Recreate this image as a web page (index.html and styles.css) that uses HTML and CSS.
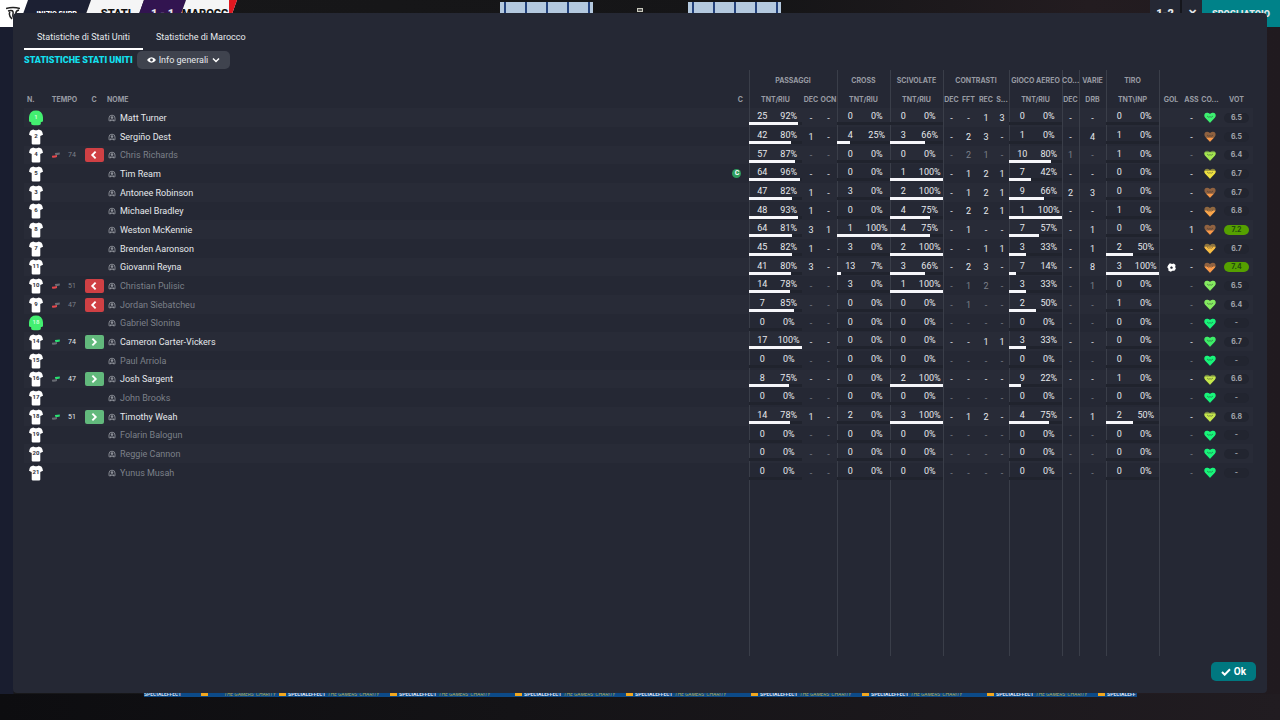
FILE: index.html
```html
<!DOCTYPE html>
<html lang="it">
<head>
<meta charset="utf-8">
<title>Statistiche Stati Uniti</title>
<link rel="stylesheet" href="styles.css">
</head>
<body>
<svg class="defs" aria-hidden="true">
  <symbol id="shirt" viewBox="0 0 14 16"><path d="M4.3.6C5 1.5 9 1.5 9.700.6L12.300 1.600Q13.400 2.300 14 5.800L11.300 7V14.600Q11.300 15.600 10 15.600H4Q2.700 15.600 2.700 14.600V7L0 5.800Q.6 2.300 1.700 1.600Z"/></symbol>
  <symbol id="keeper" viewBox="0 0 14 16"><path d="M4.300.8Q7 .2 9.700.8Q12.400 1.700 13.400 4.500Q14.400 7.500 13.900 11.400L11.800 12.200V14Q11.600 15.300 7 15.300Q2.400 15.300 2.200 14V12.200L.1 11.400Q-.4 7.500.6 4.500Q1.600 1.700 4.300.8Z"/></symbol>
  <symbol id="person" viewBox="0 0 8 8"><path d="M1 6.800V4Q1 1.200 4 1.200Q7 1.200 7 4V6.800" fill="none" stroke="currentColor" stroke-width=".9"/><circle cx="4" cy="3.600" r="1.300" fill="currentColor"/><path d="M1 7.200Q1.600 5.400 3.200 5.200L4 6L4.800 5.200Q6.400 5.400 7 7.200H5.400L4 6.600L2.600 7.200Z" fill="currentColor"/></symbol>
  <symbol id="boots" viewBox="0 0 8 6"><path class="boot-back" d="M3 2.400V.9L7.800.4V2.600Q5.300 3.400 3 2.400Z"/><path class="boot-front" d="M0 5.600V3.800L2.500 3.400L5 3V4.900Q3.600 5.900 0 5.600Z"/></symbol>
  <symbol id="left" viewBox="0 0 8 8"><path d="M5.300 1.300L2.600 4L5.300 6.700" fill="none" stroke="#fff" stroke-width="1.500"/></symbol>
  <symbol id="right" viewBox="0 0 8 8"><path d="M2.700 1.300L5.400 4L2.700 6.700" fill="none" stroke="#fff" stroke-width="1.500"/></symbol>
  <symbol id="ball" viewBox="0 0 8 8"><path fill="#fff" d="M2.500.3L4.500.8L6 .4L7.600 1.800L7.300 3.500L7.900 5L6.600 6.800L4.800 6.800L3.400 7.800L1.300 6.900L1.200 5L.2 3.700L1 2Z"/><path fill="#252834" d="M3.900 2.800L5.200 3.700L4.700 5H3.300L2.800 3.700Z"/></symbol>
</svg>

<header class="match-bar">
  <div class="club"><svg viewBox="0 0 14 14"><path d="M0 2.500Q7 .5 14 2.500M2 5Q8 3 7 8T11 13M6 13Q2 9 4 6M13 4Q9 5 10 9" fill="none" stroke="#222" stroke-width="1.500"/></svg></div>
  <div class="slant phase"><span>INIZIO SUPP.</span></div>
  <div class="slant team home"><span>STATI</span></div>
  <div class="slant score"><span>1 - 1</span></div>
  <div class="slant team away"><span>MAROCC</span></div>
  <div class="top-actions">
    <span class="formation">1-2</span>
    <span class="toggle">✕</span>
    <span class="locker">SPOGLIATOIO</span>
  </div>
</header>
<div class="glass glass-left"></div>
<div class="lamp"></div>
<div class="glass glass-right"></div>
<div class="adboard" aria-hidden="true">
  <span class="ad first">SPECIALEFFECT</span>
  <span class="ad lead"><i></i><em>THE GAMERS' CHARITY</em></span>
  <span class="ad"><i></i><b>SPECIALEFFECT</b><em>THE GAMERS' CHARITY</em></span>
  <span class="ad wide"><i></i><b>SPECIALEFFECT</b><em>THE GAMERS' CHARITY</em></span>
  <span class="ad"><i></i><b>SPECIALEFFECT</b><em>THE GAMERS' CHARITY</em></span>
  <span class="ad wide"><i></i><b>SPECIALEFFECT</b><em>THE GAMERS' CHARITY</em></span>
  <span class="ad"><i></i><b>SPECIALEFFECT</b><em>THE GAMERS' CHARITY</em></span>
  <span class="ad wide"><i></i><b>SPECIALEFFECT</b><em>THE GAMERS' CHARITY</em></span>
  <span class="ad"><i></i><b>SPECIALEFFECT</b><em>THE GAMERS' CHARITY</em></span>
  <span class="ad last"><i></i><b>SPECIALEFF</b></span>
</div>

<main class="dialog">
  <nav class="tabs">
    <button class="tab active" type="button">Statistiche di Stati Uniti</button>
    <button class="tab" type="button">Statistiche di Marocco</button>
  </nav>
  <div class="heading">
    <h1>STATISTICHE STATI UNITI</h1>
    <label class="view">
      <svg class="eye" viewBox="0 0 10 8"><path d="M0 4Q2 1 5 1T10 4Q8 7 5 7T0 4Z" fill="#fff"/><circle cx="5" cy="4" r="1.600" fill="#3f434e"/></svg>
      <select aria-label="Vista"><option>Info generali</option></select>
      <svg class="chevron" viewBox="0 0 8 6"><path d="M1 1.500L4 4.500L7 1.500" fill="none" stroke="#fff" stroke-width="1.500"/></svg>
    </label>
  </div>
  <div class="table-wrap">
    <table class="stats">
      <colgroup>
        <col class="w24"><col class="w15"><col class="w18"><col class="w26"><col><col class="w24">
        <col class="w53"><col class="w18"><col class="w17">
        <col class="w53"><col class="w53">
        <col class="w17"><col class="w17"><col class="w18"><col class="w14">
        <col class="w53"><col class="w17"><col class="w27"><col class="w53">
        <col class="w24"><col class="w17"><col class="w20"><col class="w33">
      </colgroup>
      <thead>
        <tr class="groups">
          <th colspan="6"></th>
          <th colspan="3" class="line">PASSAGGI</th>
          <th class="line">CROSS</th>
          <th class="line">SCIVOLATE</th>
          <th colspan="4" class="line">CONTRASTI</th>
          <th class="line">GIOCO AEREO</th>
          <th class="line">CO...</th>
          <th class="line">VARIE</th>
          <th class="line">TIRO</th>
          <th colspan="4" class="line"></th>
        </tr>
        <tr class="columns">
          <th class="number-head">N.</th><th colspan="2">TEMPO</th><th>C</th><th class="name-head">NOME</th><th class="captain-head">C</th>
          <th class="line">TNT/RIU</th><th>DEC</th><th>OCN</th>
          <th class="line">TNT/RIU</th>
          <th class="line">TNT/RIU</th>
          <th class="line">DEC</th><th>FFT</th><th>REC</th><th>S...</th>
          <th class="line">TNT/RIU</th>
          <th class="line">DEC</th>
          <th class="line">DRB</th>
          <th class="line">TNT\INP</th>
          <th class="line">GOL</th><th>ASS</th><th>CO...</th><th>VOT</th>
        </tr>
      </thead>
      <tbody id="players"></tbody>
    </table>
  </div>
  <footer class="actions">
    <button class="ok" type="button"><svg viewBox="0 0 10 8"><path d="M1 4L3.700 6.700L9 1.300" fill="none" stroke="#fff" stroke-width="2"/></svg>Ok</button>
  </footer>
</main>
<script src="app.js"></script>
</body>
</html>
```
FILE: styles.css
```css
* { box-sizing: border-box; }

body {
  margin: 0;
  height: 100vh;
  position: relative;
  overflow: hidden;
  background:
    linear-gradient(90deg, #0d0d10, #141316 40%, #211c21) bottom / 100% 26px no-repeat,
    linear-gradient(90deg, #191d2f 13px, #171719 14px, #151517 60%, #231c20 85%, #201a1f);
  color: #e6e8ec;
  font: 9px/12px Roboto, "Liberation Sans", sans-serif;
}

button, select { font: inherit; color: inherit; border: 0; padding: 0; background: none; }
.defs { position: absolute; width: 0; height: 0; }

/* Match bar behind the dialog */
.match-bar { display: flex; height: 27px; font-weight: 900; font-size: 11px; }
.club { width: 28px; background: #fff; padding: 6px; }
.club svg { display: block; width: 14px; height: 14px; }
.slant { display: flex; justify-content: center; padding-top: 8px; height: 14px; clip-path: polygon(5px 0, 100% 0, calc(100% - 5px) 100%, 0 100%); margin-left: -5px; white-space: nowrap; }
.phase { width: 68px; background: #1c2033; font-size: 7px; color: #fff; }
.team { background: #f5f5f6; color: #111; }
.home { width: 58px; padding-left: 2px; }
.score { width: 47px; background: #321450; }
.away { width: 56px; border-right: 8px solid #e01820; }
.top-actions { display: flex; margin-left: auto; width: 130px; }
.top-actions span { padding-top: 8px; text-align: center; }
.formation { width: 30px; height: 14px; background: #252834; }
.toggle { width: 22px; height: 14px; background: #252834; border-left: 2px solid #15161c; }
.locker { flex: 1; background: #008289; font-size: 9px; }
.glass { position: absolute; top: 2px; height: 12px; width: 93px; background: repeating-linear-gradient(90deg, #b4c9df 0 4px, #24427c 4px 6px, #b4c9df 6px 21px); }
.glass-left { left: 500px; }
.glass-right { left: 688px; }
.lamp { position: absolute; left: 637px; top: 8px; width: 6px; height: 4px; border: 1px solid #c8c8bc; background: #555; }
.adboard {
  position: absolute; left: 144px; right: 143px; bottom: 23px; height: 6px; display: flex;
  background: #0c4a88; color: #d3dde9; font-size: 5px; line-height: 6px; font-weight: 700; white-space: nowrap;
}
.ad { flex: none; display: flex; gap: 2px; width: 111px; }
.ad.wide { width: 125px; }
.ad.first { width: 57px; }
.ad.lead { width: 78px; gap: 16px; }
.ad.last { width: 39px; }
.ad i { width: 7px; height: 3px; margin-top: 2px; background: #f2a71e; }
.ad em { color: #b3a848; font-weight: 400; }

/* Dialog */
.dialog {
  position: absolute; inset: 13px 13px 27px; display: flex; flex-direction: column;
  padding: 12px 11px; border-radius: 4px; background: #252834;
}
.tabs { display: flex; }
.tab { height: 25px; padding: 0 13px; border-bottom: 2px solid transparent; }
.tab.active { border-color: #fff; }
.heading { display: flex; align-items: center; gap: 4px; margin-top: 1px; height: 18px; }
h1 { margin: 0; color: #12e0f0; font-size: 9px; line-height: 12px; font-weight: 900; white-space: nowrap; }
.view { display: flex; align-items: center; gap: 3px; height: 18px; padding: 0 10px; border-radius: 5px; background: #3f434e; }
.view select { appearance: none; width: 50px; outline: 0; }
.eye { width: 9px; height: 8px; }
.chevron { width: 8px; height: 6px; }

.table-wrap { flex: 1; min-height: 0; margin: 1px 3px 0 0; }
.stats { width: 100%; height: 100%; table-layout: fixed; border-collapse: separate; border-spacing: 0; }
.stats th, .stats td { padding: 0; text-align: center; white-space: nowrap; }
.stats th { padding-top: 1px; color: #989ba3; font: 700 7px/10px Inter, "Liberation Sans", sans-serif; }
.groups { height: 20px; }
.columns { height: 18px; }
.stats .name-head { text-align: left; }
.stats .number-head { text-align: left; padding-left: 3px; }
.stats .captain-head { padding-left: 7px; }
.stats .line { background: linear-gradient(#3a3e49, #3a3e49) left / 1px 100% no-repeat; }
.player { height: 19px; }
.player:nth-child(3n) { height: 18px; }
.player:nth-child(odd) { background: #282b37; }
.player td { vertical-align: middle; line-height: 12px; }
.player svg { display: block; }
.filler td { height: 100%; }
.dim { color: #7c8089; }
.stats .name { text-align: left; }
.name div { display: flex; align-items: center; gap: 4px; padding-left: 1px; }
.name svg { width: 8px; height: 8px; color: #8b8e96; }
.kit { width: 14px; height: 16px; margin: 0 auto; fill: #fff; }
.kit.keeper { fill: #43ef70; }
.kit text { font-size: 6px; font-weight: 700; text-anchor: middle; fill: #333640; }
.kit.keeper text { fill: #c8ffd6; }
.swap { width: 8px; height: 6px; margin: 0 auto; }
.swap.out { fill: #e2474c; --back: #686b73; }
.swap.in { fill: #686b73; --back: #29e072; }
.boot-back { fill: var(--back); }
.time { font-size: 7px; }
.move { display: flex; align-items: center; justify-content: center; width: 19px; height: 14px; margin: 0 auto; border-radius: 2px; }
.move.out { background: #cf4044; }
.move.in { background: #62b97c; }
.move svg { width: 10px; height: 10px; }
.captain { display: block; width: 9px; height: 9px; margin: 0 auto; border-radius: 50%; background: #2f9e5f; color: #fff; font-size: 7px; line-height: 9px; font-weight: 700; }
.ratio { display: grid; grid-template-columns: 1fr 1fr; color: #e6e8ec; }
.ratio .bar { grid-column: 1 / 3; height: 3px; background: #20232d; }
.ratio .bar b { display: block; height: 3px; background: #f6f6fa; }
.heart { width: 12px; height: 11px; margin: 0 auto; }
.goal { width: 9px; height: 9px; margin: 0 auto; }
.vote { display: block; width: 25px; height: 10px; margin: 0 auto; border-radius: 5px; background: #222530; color: #a3a6ad; font: 700 7px/10px Inter, "Liberation Sans", sans-serif; }
.vote.good { background: #55a000; color: #234a10; }

.actions { display: flex; justify-content: flex-end; margin-top: 6px; }
.ok { display: flex; align-items: center; gap: 3px; height: 19px; padding: 0 10px; border-radius: 5px; background: #007880; color: #fff; font-weight: 700; font-size: 10px; }
.ok svg { width: 10px; height: 8px; }
```
FILE: app.js
```js
// number, name, substitution, minute, passes, dec, ocn, cross, tackles, [challenges], aerial, co, drb, shots, assists, [heart colour, fill], rating
const players = [
  [1, "Matt Turner", "", "", [25, 92], "-", "-", [0, 0], [0, 0], ["-", "-", 1, 3], [0, 0], "-", "-", [0, 0], "-", ["#3df070", 100], "6.5"],
  [2, "Sergiño Dest", "", "", [42, 80], 1, "-", [4, 25], [3, 66], ["-", 2, 3, "-"], [1, 0], "-", 4, [1, 0], "-", ["#f99a4a", 38], "6.5"],
  [4, "Chris Richards", "out", 74, [57, 87], "-", "-", [0, 0], [0, 0], ["-", 2, 1, "-"], [10, 80], 1, "-", [1, 0], "-", ["#a4e650", 80], "6.4"],
  [5, "Tim Ream", "", "", [64, 96], "-", "-", [0, 0], [1, 100], ["-", 1, 2, 1], [7, 42], "-", "-", [0, 0], "-", ["#eee040", 75], "6.7"],
  [3, "Antonee Robinson", "", "", [47, 82], 1, "-", [3, 0], [2, 100], ["-", 1, 2, 1], [9, 66], 2, 3, [0, 0], "-", ["#f99a4a", 38], "6.7"],
  [6, "Michael Bradley", "", "", [48, 93], 1, "-", [0, 0], [4, 75], ["-", 2, 2, 1], [1, 100], "-", "-", [1, 0], "-", ["#faa54a", 60], "6.8"],
  [8, "Weston McKennie", "", "", [64, 81], 3, 1, [1, 100], [4, 75], ["-", 1, "-", "-"], [7, 57], "-", 1, [0, 0], 1, ["#f99a4a", 40], "7.2"],
  [7, "Brenden Aaronson", "", "", [45, 82], 1, "-", [3, 0], [2, 100], ["-", "-", 1, 1], [3, 33], "-", 1, [2, 50], "-", ["#f8bd45", 65], "6.7"],
  [11, "Giovanni Reyna", "", "", [41, 80], 3, "-", [13, 7], [3, 66], ["-", 2, 3, "-"], [7, 14], "-", 8, [3, 100], "-", ["#f99a4a", 58], "7.4"],
  [10, "Christian Pulisic", "out", 51, [14, 78], "-", "-", [3, 0], [1, 100], ["-", 1, 2, "-"], [3, 33], "-", 1, [0, 0], "-", ["#84ea60", 100], "6.5"],
  [9, "Jordan Siebatcheu", "out", 47, [7, 85], "-", "-", [0, 0], [0, 0], ["-", 1, "-", "-"], [2, 50], "-", "-", [1, 0], "-", ["#84ea60", 100], "6.4"],
  [18, "Gabriel Slonina", "bench"],
  [14, "Cameron Carter-Vickers", "in", 74, [17, 100], "-", "-", [0, 0], [0, 0], ["-", "-", 1, 1], [3, 33], "-", "-", [0, 0], "-", ["#3dee68", 100], "6.7"],
  [15, "Paul Arriola", "bench"],
  [16, "Josh Sargent", "in", 47, [8, 75], "-", "-", [0, 0], [2, 100], ["-", "-", "-", "-"], [9, 22], "-", "-", [1, 0], "-", ["#c4e64c", 78], "6.6"],
  [17, "John Brooks", "bench"],
  [18, "Timothy Weah", "in", 51, [14, 78], 1, "-", [2, 0], [3, 100], ["-", 1, 2, "-"], [4, 75], "-", 1, [2, 50], "-", ["#c4e64c", 78], "6.8"],
  [19, "Folarin Balogun", "bench"],
  [20, "Reggie Cannon", "bench"],
  [21, "Yunus Musah", "bench"]
];
const unused = ["", [0, 0], "-", "-", [0, 0], [0, 0], ["-", "-", "-", "-"], [0, 0], "-", "-", [0, 0], "-", ["#18f57a", 100], "-"];

const ratio = ([total, percent]) =>
  `<td class="line"><div class="ratio"><span>${total}</span><span>${percent}%</span><div class="bar"><b style="width:${percent}%"></b></div></div></td>`;
const cell = (value, line) => `<td${line ? ' class="line"' : ""}>${value}</td>`;

function heart([color, fill], index) {
  const y = 11 - fill * 0.11;
  const outline = "M6 10.8L1 5.600Q-.2 3.500 1 1.600Q3-.5 6 2Q9-.5 11 1.600Q12.200 3.500 11 5.600Z";
  return `<svg class="heart" viewBox="0 0 12 11"><clipPath id="level${index}"><rect y="${y}" width="12" height="11"/></clipPath>
    <path d="${outline}" fill="${color}" opacity=".5"/><path d="${outline}" fill="${color}" clip-path="url(#level${index})"/>
    <path d="M3 4L4.700 5.200L6 4.700L7.300 5.200L9 4" fill="none" stroke="#252834" stroke-opacity=".5" stroke-width=".9"/></svg>`;
}

const rows = players.map((player, index) => {
  const [number, name, status] = player;
  const [time, passes, dec, ocn, cross, tackles, duels, aerial, co, drb, shots, assists, energy, rating] =
    status === "bench" ? unused : player.slice(3);
  const dim = status === "bench" || status === "out";
  const swapped = status === "in" || status === "out";
  const keeper = index === 0 || index === 11;
  return `<tr class="player ${dim ? "dim" : ""}">
    <td><svg class="kit ${keeper ? "keeper" : ""}" viewBox="0 0 14 16"><use href="#${keeper ? "keeper" : "shirt"}"/><text x="7" y="9">${number}</text></svg></td>
    <td>${swapped ? `<svg class="swap ${status}"><use href="#boots"/></svg>` : ""}</td>
    <td class="time">${time}</td>
    <td>${swapped ? `<span class="move ${status}"><svg><use href="#${status === "in" ? "right" : "left"}"/></svg></span>` : ""}</td>
    <td class="name"><div><svg><use href="#person"/></svg>${name}</div></td>
    <td>${name === "Tim Ream" ? '<span class="captain">C</span>' : ""}</td>
    ${ratio(passes)}${cell(dec)}${cell(ocn)}${ratio(cross)}${ratio(tackles)}
    ${duels.map((value, i) => cell(value, i === 0)).join("")}
    ${ratio(aerial)}${cell(co, true)}${cell(drb, true)}${ratio(shots)}
    <td class="line">${name === "Giovanni Reyna" ? '<svg class="goal"><use href="#ball"/></svg>' : ""}</td>
    ${cell(assists)}<td>${heart(energy, index)}</td>
    <td><span class="vote ${Number(rating) > 7 ? "good" : ""}">${rating}</span></td>
  </tr>`;
}).join("");

// The last row takes the free height, so that the group lines reach the foot of the table.
const filler = `<tr class="filler"><td colspan="6"></td>${[3, 1, 1, 4, 1, 1, 1, 1, 4]
  .map(span => `<td class="line" colspan="${span}"></td>`).join("")}</tr>`;

document.getElementById("players").innerHTML = rows + filler;

[14, 15, 17, 18, 20, 24, 26, 27, 33, 53].forEach(width =>
  document.querySelectorAll(`col.w${width}`).forEach(col => { col.style.width = `${width}px`; }));
```
